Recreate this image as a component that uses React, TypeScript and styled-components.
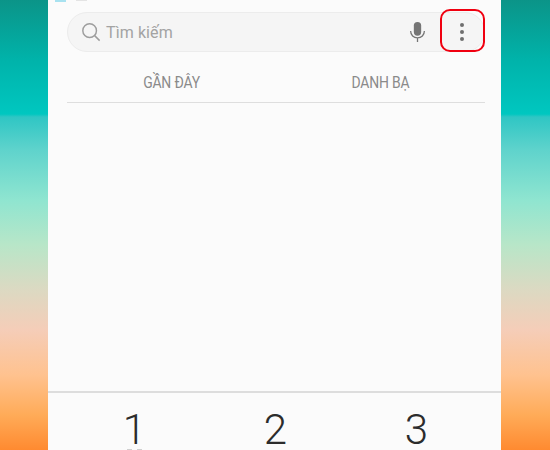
import styled, { createGlobalStyle } from "styled-components";

const GlobalStyle = createGlobalStyle`
  html, body {
    margin: 0;
    padding: 0;
    background: #fff;
  }
`

const Wallpaper = styled.div`
  display: flex;
  justify-content: flex-start;
  width: 550px;
  height: 450px;
  padding-left: 48px;
  box-sizing: border-box;
  overflow: hidden;
  background: linear-gradient(180deg,
    #0b9488 0px, #00b3aa 60px, #00c7c0 114px,
    #2fc6c4 117px, #5fd3cc 150px, #8fe5d0 200px,
    #b8e6c8 245px, #dcd9c2 290px, #f5cdb8 330px,
    #ffc28f 375px, #ffab58 415px, #ff8a30 450px);
`

const Phone = styled.div`
  display: flex;
  flex-direction: column;
  width: 453px;
  height: 450px;
  background: #fbfbfb;
  font-family: Roboto, "Noto Sans", sans-serif;
`

const StatusBar = styled.div`
  display: flex;
  gap: 10px;
  height: 12px;
  padding-left: 7px;
`

const StatusIcon = styled.div<{ $faint?: boolean }>`
  width: 11px;
  height: ${({$faint}) => $faint ? '1px' : '2px'};
  background: ${({$faint}) => $faint ? '#e4e4e4' : '#a8e2f0'};
`

const SearchRow = styled.div`
  position: relative;
  display: flex;
  align-items: center;
  height: 40px;
  margin: 0 16px 0 19px;
  padding: 0 0 0 13px;
  border: 1px solid #ececec;
  border-radius: 20px;
  box-sizing: border-box;
  background: #f5f5f5;
`

const SearchLabel = styled.span`
  flex: 1;
  margin-left: 5px;
  padding-top: 1px;
  font-size: 16px;
  letter-spacing: 0.1px;
  color: #a3a3a3;
`

const MicButton = styled.div`
  display: flex;
  margin-right: 34px;
`

const MoreButton = styled.div`
  display: flex;
  flex-direction: column;
  gap: 3px;
  align-items: center;
  margin-right: 20px;
`

const Dot = styled.span`
  width: 4px;
  height: 4px;
  border-radius: 50%;
  background: #6f6f6f;
`

const Highlight = styled.div`
  position: absolute;
  top: -4px;
  right: -1px;
  width: 45px;
  height: 43px;
  border: 2px solid #f00010;
  border-radius: 10px;
  box-sizing: border-box;
`

const Tabs = styled.div`
  display: grid;
  grid-template-columns: 1fr 1fr;
  height: 51px;
  margin: 0 16px 0 19px;
  padding-top: 10px;
  border-bottom: 1px solid #dedede;
  box-sizing: border-box;
`

const Tab = styled.div`
  display: flex;
  justify-content: center;
  align-items: center;
  font-size: 16px;
  letter-spacing: -0.2px;
  color: #8a8a8a;
  transform: scaleX(0.87);
`

const RecentList = styled.div`
  flex: 1;
`

const Keypad = styled.div`
  display: grid;
  grid-template-columns: repeat(3, 141px);
  justify-content: center;
  height: 59px;
  padding-left: 2px;
  border-top: 2px solid #dddddd;
  box-sizing: border-box;
`

const Key = styled.div`
  display: flex;
  flex-direction: column;
  align-items: center;
  gap: 3px;
  padding-top: 21px;
  font-size: 42px;
  font-weight: 300;
  line-height: 32px;
  color: #2c2c2c;
`

const SearchIcon = () => (
  <svg width="20" height="20" viewBox="0 0 22 22" fill="none" stroke="#9d9d9d" strokeWidth="1.6">
    <circle cx="9.5" cy="9.5" r="7.5" />
    <path d="M15 15l5.5 5.5" />
  </svg>
)

const MicIcon = () => (
  <svg width="17" height="22" viewBox="0 0 18 24" fill="none">
    <rect x="5" y="1" width="8" height="15" rx="4" fill="#757575" />
    <path d="M1.5 11c0 4.4 3.3 7.5 7.5 7.5s7.5-3.1 7.5-7.5M9 18.5V23" stroke="#757575" strokeWidth="1.4" />
  </svg>
)

const VoicemailTop = () => (
  <svg width="15" height="1" viewBox="0 0 15 1">
    <path d="M0 .5h5M10 .5h5" stroke="#cfcfcf" />
  </svg>
)

export default function App() {
  return (
    <>
      <GlobalStyle />
      <Wallpaper>
        <Phone>
          <StatusBar>
            <StatusIcon />
            <StatusIcon $faint />
          </StatusBar>
          <SearchRow>
            <SearchIcon />
            <SearchLabel>Tìm kiếm</SearchLabel>
            <MicButton>
              <MicIcon />
            </MicButton>
            <MoreButton>
              <Dot />
              <Dot />
              <Dot />
            </MoreButton>
            <Highlight />
          </SearchRow>
          <Tabs>
            <Tab>GẦN ĐÂY</Tab>
            <Tab>DANH BẠ</Tab>
          </Tabs>
          <RecentList />
          <Keypad>
            <Key>1<VoicemailTop /></Key>
            <Key>2</Key>
            <Key>3</Key>
          </Keypad>
        </Phone>
      </Wallpaper>
    </>
  )
}
